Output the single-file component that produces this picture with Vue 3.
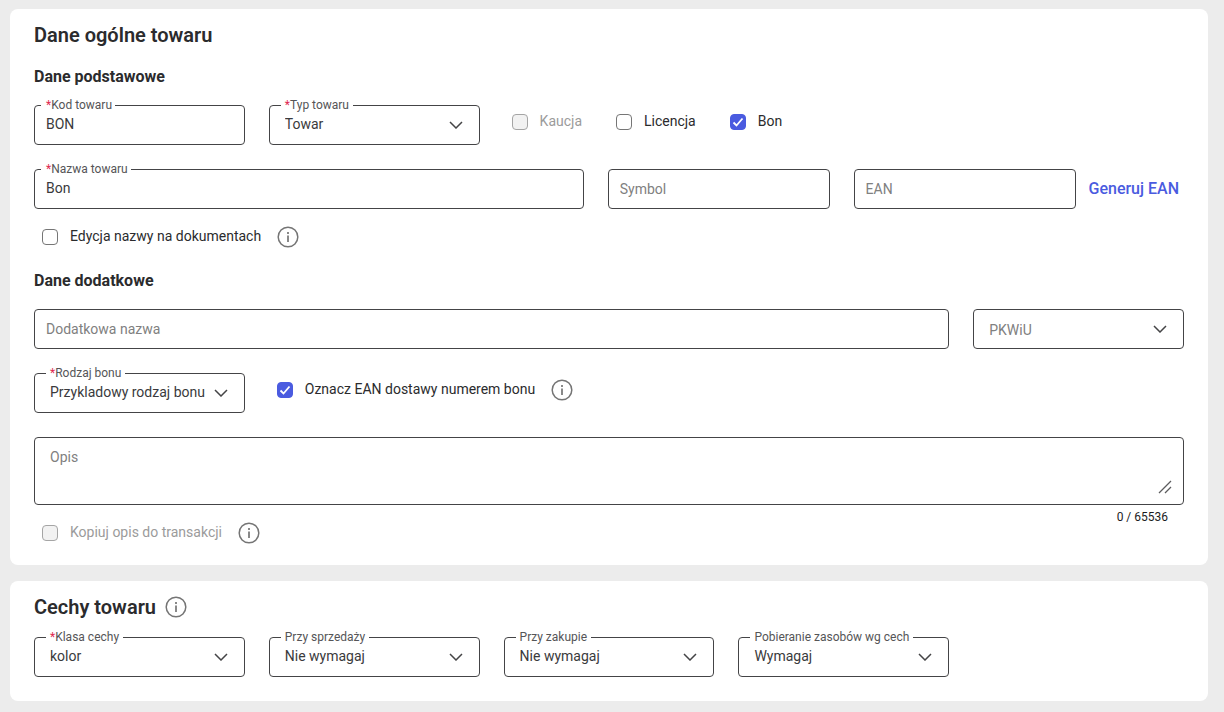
<script setup>
import { reactive, computed } from 'vue'

const form = reactive({
  code: 'BON',
  type: 'Towar',
  deposit: false,
  licence: false,
  voucher: true,
  name: 'Bon',
  symbol: '',
  ean: '',
  editName: false,
  extraName: '',
  pkwiu: '',
  voucherKind: 'Przykladowy rodzaj bonu',
  markEan: true,
  description: '',
  copyDescription: false
})

const features = reactive([
  { id: 'feature-class', label: 'Klasa cechy', required: true, value: 'kolor' },
  { id: 'feature-sale', label: 'Przy sprzedaży', required: false, value: 'Nie wymagaj' },
  { id: 'feature-purchase', label: 'Przy zakupie', required: false, value: 'Nie wymagaj' },
  { id: 'feature-stock', label: 'Pobieranie zasobów wg cech', required: false, value: 'Wymagaj' }
])

const descriptionLength = computed(() => form.description.length)
</script>

<template>
  <main class="page">
    <section class="panel">
      <h2>Dane ogólne towaru</h2>
      <h3>Dane podstawowe</h3>

      <div class="columns">
        <div class="field">
          <input id="code" v-model="form.code" type="text" required />
          <label for="code" class="small"><b>*</b>Kod towaru</label>
        </div>
        <div class="field">
          <select id="type" v-model="form.type" required>
            <option>Towar</option>
          </select>
          <label for="type"><b>*</b>Typ towaru</label>
          <svg class="chevron" viewBox="0 0 14 8"><path d="M1 1l6 6 6-6" /></svg>
        </div>
        <div class="checks rest">
          <label class="check disabled">
            <span class="box"><input v-model="form.deposit" type="checkbox" disabled /><svg viewBox="0 0 16 16"><path d="M3.5 8.5l3 3 6-7" /></svg></span>
            <span class="caption">Kaucja</span>
          </label>
          <label class="check">
            <span class="box"><input v-model="form.licence" type="checkbox" /><svg viewBox="0 0 16 16"><path d="M3.5 8.5l3 3 6-7" /></svg></span>
            <span class="caption">Licencja</span>
          </label>
          <label class="check">
            <span class="box"><input v-model="form.voucher" type="checkbox" /><svg viewBox="0 0 16 16"><path d="M3.5 8.5l3 3 6-7" /></svg></span>
            <span class="caption">Bon</span>
          </label>
        </div>
      </div>

      <div class="names">
        <div class="name-fields">
          <div class="field">
            <input id="name" v-model="form.name" type="text" required />
            <label for="name" class="small"><b>*</b>Nazwa towaru</label>
          </div>
          <div class="field">
            <input v-model="form.symbol" type="text" placeholder="Symbol" aria-label="Symbol" />
          </div>
          <div class="field">
            <input v-model="form.ean" type="text" placeholder="EAN" aria-label="EAN" />
          </div>
        </div>
        <button type="button" class="generate">Generuj EAN</button>
      </div>

      <div class="option-row">
        <label class="check">
          <span class="box"><input v-model="form.editName" type="checkbox" /><svg viewBox="0 0 16 16"><path d="M3.5 8.5l3 3 6-7" /></svg></span>
          <span class="caption">Edycja nazwy na dokumentach</span>
        </label>
        <svg class="info" viewBox="0 0 22 22"><circle cx="11" cy="11" r="9.8" /><path d="M11 9.5v6.5M11 6v2" /></svg>
      </div>

      <h3>Dane dodatkowe</h3>

      <div class="columns">
        <div class="field wide">
          <input v-model="form.extraName" type="text" placeholder="Dodatkowa nazwa" aria-label="Dodatkowa nazwa" />
        </div>
        <div class="field">
          <select v-model="form.pkwiu" class="empty" aria-label="PKWiU">
            <option value="">PKWiU</option>
          </select>
          <svg class="chevron" viewBox="0 0 14 8"><path d="M1 1l6 6 6-6" /></svg>
        </div>
        <div class="field">
          <select id="voucher-kind" v-model="form.voucherKind" required>
            <option>Przykladowy rodzaj bonu</option>
          </select>
          <label for="voucher-kind"><b>*</b>Rodzaj bonu</label>
          <svg class="chevron" viewBox="0 0 14 8"><path d="M1 1l6 6 6-6" /></svg>
        </div>
        <div class="checks wide">
          <label class="check">
            <span class="box"><input v-model="form.markEan" type="checkbox" /><svg viewBox="0 0 16 16"><path d="M3.5 8.5l3 3 6-7" /></svg></span>
            <span class="caption">Oznacz EAN dostawy numerem bonu</span>
          </label>
          <svg class="info" viewBox="0 0 22 22"><circle cx="11" cy="11" r="9.8" /><path d="M11 9.5v6.5M11 6v2" /></svg>
        </div>
      </div>

      <div class="field description">
        <textarea v-model="form.description" placeholder="Opis" aria-label="Opis" maxlength="65536"></textarea>
        <svg class="grip" viewBox="0 0 14 14"><path d="M1 13L13 1M7 13l6-6" /></svg>
      </div>

      <div class="footer">
        <div class="option-row">
          <label class="check disabled">
            <span class="box"><input v-model="form.copyDescription" type="checkbox" disabled /><svg viewBox="0 0 16 16"><path d="M3.5 8.5l3 3 6-7" /></svg></span>
            <span class="caption">Kopiuj opis do transakcji</span>
          </label>
          <svg class="info" viewBox="0 0 22 22"><circle cx="11" cy="11" r="9.8" /><path d="M11 9.5v6.5M11 6v2" /></svg>
        </div>
        <span class="counter">{{ descriptionLength }} / 65536</span>
      </div>
    </section>

    <section class="panel features">
      <div class="heading">
        <h2>Cechy towaru</h2>
        <svg class="info" viewBox="0 0 22 22"><circle cx="11" cy="11" r="9.8" /><path d="M11 9.5v6.5M11 6v2" /></svg>
      </div>
      <div class="columns">
        <div v-for="feature in features" :key="feature.id" class="field">
          <select :id="feature.id" v-model="feature.value">
            <option>{{ feature.value }}</option>
          </select>
          <label :for="feature.id"><b v-if="feature.required">*</b>{{ feature.label }}</label>
          <svg class="chevron" viewBox="0 0 14 8"><path d="M1 1l6 6 6-6" /></svg>
        </div>
      </div>
    </section>
  </main>
</template>

<style>
body {
  background: #ececec;
}
</style>

<style scoped>
.page {
  display: flex;
  flex-direction: column;
  gap: 16px;
  padding: 9px 16px 11px 10px;
  font-family: Roboto, "Liberation Sans", sans-serif;
  font-size: 14px;
  color: #2b2b2d;
}

.page * {
  box-sizing: border-box;
}

.panel {
  padding: 14px 24px 20px;
  border-radius: 8px;
  background: #fff;
}

h2 {
  margin: 0;
  font-size: 20px;
  line-height: 24px;
  font-weight: 600;
}

h3 {
  margin: 20px 0 18px;
  font-size: 16px;
  line-height: 20px;
  font-weight: 700;
}

.columns {
  display: grid;
  grid-template-columns: repeat(5, 1fr);
  gap: 24px;
}

.wide {
  grid-column: span 4;
}

.rest {
  grid-column: span 3;
}

.field {
  position: relative;
}

input,
select,
textarea,
button {
  font: inherit;
}

.field input,
.field select,
.field textarea {
  display: block;
  width: 100%;
  height: 40px;
  margin: 0;
  border: 1px solid #444446;
  border-radius: 4px;
  background: transparent;
  color: #3a3a3c;
  outline: none;
  appearance: none;
}

.field input {
  padding: 0 11px;
}

.field select {
  padding: 0 30px 2px 15px;
}

.field select.empty {
  padding-top: 2px;
  padding-bottom: 0;
  color: #808080;
}

.field textarea {
  height: 68px;
  padding: 11px 15px;
  line-height: 16px;
  resize: none;
}

.field input:valid:required {
  padding-bottom: 2px;
}

.field ::placeholder {
  color: #808080;
  opacity: 1;
}

.field > label {
  position: absolute;
  top: -8px;
  left: 12px;
  padding: 0 4px;
  background: #fff;
  color: #555557;
  font-size: 12px;
  line-height: 16px;
  white-space: nowrap;
}

.field > label.small {
  left: 7px;
  padding: 0 3px 0 5px;
}

.field > label b {
  color: #e0284f;
  font-weight: 400;
}

.chevron {
  position: absolute;
  top: 16px;
  right: 17px;
  width: 14px;
  height: 8px;
  pointer-events: none;
}

.chevron path,
.grip path {
  fill: none;
  stroke: #444446;
  stroke-width: 1.5;
}

.grip {
  position: absolute;
  right: 12px;
  bottom: 11px;
  width: 14px;
  height: 14px;
  pointer-events: none;
}

.grip path {
  stroke: #5c5c5e;
  stroke-width: 1.3;
}

.checks {
  display: flex;
  align-items: center;
  height: 34px;
}

.rest {
  gap: 18px;
}

.check {
  display: flex;
  align-items: center;
  gap: 12px;
  padding: 0 8px;
  line-height: 20px;
}

.caption {
  padding-bottom: 2px;
}

.check.disabled {
  color: #9b9b9b;
}

.box {
  display: grid;
  width: 16px;
  height: 16px;
}

.box > * {
  grid-area: 1 / 1;
}

.box input {
  width: 16px;
  height: 16px;
  margin: 0;
  border: 1px solid #767676;
  border-radius: 4px;
  background: #fff;
  appearance: none;
}

.box input:disabled {
  border-color: #a5a5a5;
  background: #f2f2f2;
}

.box input:checked {
  border-color: #4a5be0;
  background: #4a5be0;
}

.box svg {
  width: 16px;
  height: 16px;
  pointer-events: none;
  visibility: hidden;
}

.box input:checked + svg {
  visibility: visible;
}

.box path {
  fill: none;
  stroke: #fff;
  stroke-width: 1.8;
}

.info {
  flex: none;
  width: 22px;
  height: 22px;
  fill: none;
  stroke: #757575;
  stroke-width: 1.5;
}

.info path {
  stroke-width: 1.7;
}

.check + .info {
  margin-left: 8px;
}

.names {
  display: flex;
  margin-top: 24px;
}

.name-fields {
  display: grid;
  flex: 1;
  grid-template-columns: 550fr 222fr 222fr;
  gap: 24px;
}

.generate {
  padding: 0 5px 2px 13px;
  border: 0;
  background: none;
  color: #4a5be0;
  font-size: 16px;
  font-weight: 500;
}

.option-row {
  display: flex;
  align-items: center;
  height: 24px;
}

.names + .option-row {
  margin: 16px 0 22px;
}

.description {
  margin-top: 24px;
}

.footer {
  display: flex;
  justify-content: space-between;
  align-items: flex-start;
  padding: 4px 16px 0 0;
}

.footer .option-row {
  margin-top: 12px;
}

.counter {
  color: #1c1c1e;
  font-size: 12px;
  line-height: 16px;
}

.heading {
  display: flex;
  align-items: center;
  gap: 9px;
  margin-bottom: 18px;
}

.features {
  padding-bottom: 24px;
}
</style>
